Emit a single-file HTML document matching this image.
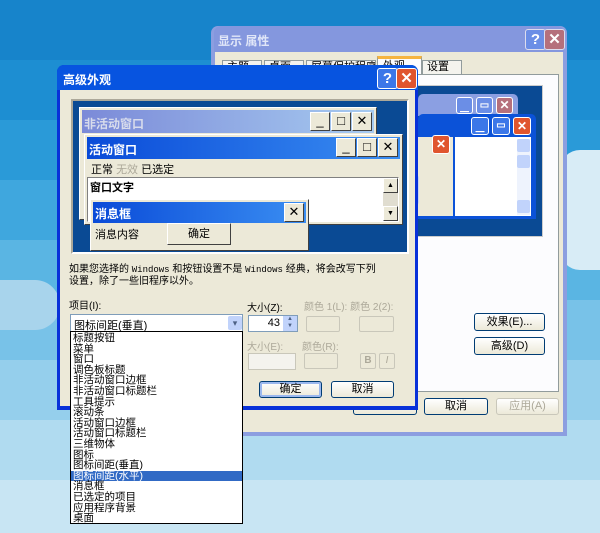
<!DOCTYPE html>
<html><head><meta charset="utf-8"><style>
*{margin:0;padding:0;box-sizing:border-box}
html,body{width:600px;height:533px;overflow:hidden;background:#6db9e4}
body{position:relative;font-family:"Liberation Sans","Noto Sans CJK SC","WenQuanYi Zen Hei",sans-serif;font-size:11px;color:#000}
.a{position:absolute}
.band{position:absolute;left:0;width:600px}
.beige{background:#ece9d8}
.tb{font-weight:bold;color:#fff;font-size:12px}
.btnx{position:absolute;width:21px;height:21px;border:1px solid #fff;border-radius:3px;background:#e0552e;color:#fff;font-weight:bold;font-size:15px;text-align:center;line-height:19px}
.btnh{position:absolute;width:21px;height:21px;border:1px solid #fff;border-radius:3px;background:#3c77e8;color:#fff;font-weight:bold;font-size:15px;text-align:center;line-height:19px}
.cls{position:absolute;background:#ece9d8;border:1px solid;border-color:#fff #404040 #404040 #fff;text-align:center;font-size:13px;line-height:16px;color:#000}
.xbtn{position:absolute;border:1px solid #003c74;border-radius:3px;background:linear-gradient(#fff,#ece9d8);text-align:center;font-size:11px}
.dis{color:#aca899}
.item{height:10.6px;line-height:10.6px;padding-left:2px;font-size:10.5px;white-space:nowrap}
.tab{position:absolute;top:60px;height:15px;border:1px solid #919b9c;background:#f4f3ee;padding-left:4px;line-height:13px;overflow:hidden;white-space:nowrap}
</style></head><body>
<div class="band" style="top:0;height:60px;background:#1784cb"></div>
<div class="band" style="top:60px;height:60px;background:#1d8ed2"></div>
<div class="band" style="top:120px;height:60px;background:#2a9ad8"></div>
<div class="band" style="top:180px;height:60px;background:#3fa7de"></div>
<div class="band" style="top:240px;height:60px;background:#5ab5e3"></div>
<div class="band" style="top:300px;height:60px;background:#78c2e8"></div>
<div class="band" style="top:360px;height:60px;background:#95cfec"></div>
<div class="band" style="top:420px;height:60px;background:#b0dbf0"></div>
<div class="band" style="top:480px;height:53px;background:#c8e5f3"></div>
<div class="a" style="left:560px;top:150px;width:40px;height:120px;background:#d8ecf6;border-radius:20px 0 0 20px"></div>
<div class="a" style="left:0;top:280px;width:60px;height:50px;background:#a8d4ec;border-radius:0 25px 25px 0"></div>

<!-- back window -->
<div class="a" style="left:211px;top:26px;width:356px;height:410px;background:#8c9ee0;border-radius:7px 7px 0 0"></div>
<div class="a" style="left:214px;top:26px;width:350px;height:26px;background:#8497de;border-radius:7px 7px 0 0"></div>
<div class="a tb" style="left:218px;top:32px;color:#e0e6f8">显示 属性</div>
<div class="btnh" style="left:525px;top:29px;background:#6b8ee6;border-color:#dde">?</div>
<div class="btnx" style="left:544px;top:29px;background:#b5707c;border-color:#dde">✕</div>
<div class="a beige" style="left:215px;top:52px;width:348px;height:380px"></div>
<div class="tab" style="left:222px;width:40px">主题</div>
<div class="tab" style="left:264px;width:40px">桌面</div>
<div class="tab" style="left:306px;width:70px">屏幕保护程序</div>
<div class="a" style="left:377px;top:56px;width:45px;height:19px;border:1px solid #919b9c;border-top:3px solid #f5b440;background:#fcfcfe;padding-left:5px;line-height:14px">外观</div>
<div class="tab" style="left:422px;width:40px">设置</div>
<div class="a" style="left:220px;top:74px;width:339px;height:318px;border:1px solid #919b9c;background:#fcfcfe"></div>
<div class="a" style="left:400px;top:85px;width:143px;height:152px;background:#0a4a94;border:1px solid #ccc"></div>
<div class="a" style="left:418px;top:94px;width:100px;height:22px;background:#8b9fe2;border-radius:5px 5px 0 0"></div>
<div class="btnh" style="left:456px;top:97px;width:17px;height:17px;background:#6b8ee6;font-size:9px;line-height:20px">▁</div>
<div class="btnh" style="left:476px;top:97px;width:17px;height:17px;background:#6b8ee6;font-size:10px;line-height:15px">▭</div>
<div class="btnx" style="left:496px;top:97px;width:17px;height:17px;background:#b5707c;font-size:12px;line-height:15px">✕</div>
<div class="a" style="left:418px;top:114px;width:118px;height:105px;background:#0b52d8;border-radius:5px 5px 0 0"></div>
<div class="btnh" style="left:471px;top:117px;width:18px;height:18px;font-size:9px;line-height:20px">▁</div>
<div class="btnh" style="left:492px;top:117px;width:18px;height:18px;font-size:10px;line-height:16px">▭</div>
<div class="btnx" style="left:513px;top:117px;width:18px;height:18px;font-size:12px;line-height:16px">✕</div>
<div class="a beige" style="left:418px;top:137px;width:35px;height:79px"></div>
<div class="a" style="left:418px;top:130px;width:35px;height:7px;background:#0b52d8"></div>
<div class="btnx" style="left:432px;top:135px;width:18px;height:19px;font-size:12px;line-height:17px">✕</div>
<div class="a" style="left:455px;top:137px;width:76px;height:79px;background:#fff"></div>
<div class="a" style="left:517px;top:139px;width:13px;height:76px;background:#eef3fd"></div>
<div class="a" style="left:517px;top:139px;width:13px;height:13px;background:#c1d3fb;border-radius:2px"></div>
<div class="a" style="left:517px;top:155px;width:13px;height:13px;background:#c1d3fb;border-radius:2px"></div>
<div class="a" style="left:517px;top:200px;width:13px;height:13px;background:#c1d3fb;border-radius:2px"></div>
<div class="a" style="left:411px;top:175px;width:8px;height:30px;background:#c9d5f0;border-radius:3px"></div>
<div class="xbtn" style="left:474px;top:313px;width:71px;height:18px;line-height:16px">效果(E)...</div>
<div class="xbtn" style="left:474px;top:337px;width:71px;height:18px;line-height:16px">高级(D)</div>
<div class="xbtn" style="left:353px;top:398px;width:64px;height:17px"></div>
<div class="xbtn" style="left:424px;top:398px;width:64px;height:17px;line-height:15px">取消</div>
<div class="xbtn dis" style="left:496px;top:398px;width:63px;height:17px;line-height:15px;border-color:#c9c7ba">应用(A)</div>

<!-- front dialog -->
<div class="a" style="left:57px;top:65px;width:361px;height:345px;background:#0831d9;border-radius:7px 7px 0 0"></div>
<div class="a" style="left:57px;top:65px;width:361px;height:25px;background:#0754e0;border-radius:7px 7px 0 0"></div>
<div class="a tb" style="left:63px;top:71px">高级外观</div>
<div class="btnh" style="left:377px;top:68px">?</div>
<div class="btnx" style="left:396px;top:68px">✕</div>
<div class="a beige" style="left:60px;top:90px;width:355px;height:316px"></div>
<div class="a" style="left:71px;top:99px;width:338px;height:155px;background:#0a4a94;border:2px solid;border-color:#aca899 #fff #fff #aca899"></div>
<div class="a beige" style="left:79px;top:107px;width:298px;height:113px;border:1px solid;border-color:#fff #404040 #404040 #fff"></div>
<div class="a" style="left:82px;top:110px;width:292px;height:23px;background:linear-gradient(90deg,#7b8ad8,#a6caf0)"></div>
<div class="a tb" style="left:84px;top:115px;color:#d8dcec">非活动窗口</div>
<div class="cls" style="left:310px;top:112px;width:20px;height:19px">_</div>
<div class="cls" style="left:331px;top:112px;width:20px;height:19px">□</div>
<div class="cls" style="left:352px;top:112px;width:20px;height:19px">✕</div>
<div class="a beige" style="left:84px;top:134px;width:319px;height:91px;border:1px solid;border-color:#fff #404040 #404040 #fff"></div>
<div class="a" style="left:87px;top:137px;width:313px;height:22px;background:linear-gradient(90deg,#0a4bd8,#3a8ef2)"></div>
<div class="a tb" style="left:89px;top:141px">活动窗口</div>
<div class="cls" style="left:336px;top:138px;width:20px;height:19px">_</div>
<div class="cls" style="left:357px;top:138px;width:20px;height:19px">□</div>
<div class="cls" style="left:378px;top:138px;width:20px;height:19px">✕</div>
<div class="a" style="left:91px;top:161px">正常 <span class="dis">无效</span> 已选定</div>
<div class="a" style="left:87px;top:177px;width:312px;height:45px;background:#fff;border:1px solid;border-color:#808080 #fff #fff #808080"></div>
<div class="a" style="left:90px;top:179px;font-weight:bold;font-size:11px">窗口文字</div>
<div class="a" style="left:383px;top:178px;width:15px;height:43px;background:#e0ddd0"></div>
<div class="cls" style="left:383px;top:178px;width:15px;height:15px;font-size:7px;line-height:13px">▲</div>
<div class="cls" style="left:383px;top:206px;width:15px;height:15px;font-size:7px;line-height:13px">▼</div>
<div class="a beige" style="left:90px;top:199px;width:219px;height:52px;border:1px solid;border-color:#fff #404040 #404040 #fff"></div>
<div class="a" style="left:93px;top:202px;width:213px;height:21px;background:linear-gradient(90deg,#0a4bd8,#3a8ef2)"></div>
<div class="a tb" style="left:95px;top:205px">消息框</div>
<div class="cls" style="left:284px;top:203px;width:20px;height:19px">✕</div>
<div class="a" style="left:95px;top:226px">消息内容</div>
<div class="cls" style="left:167px;top:223px;width:64px;height:22px;font-size:11px;line-height:20px">确定</div>

<div class="a" style="left:69px;top:264px;font-size:10px;line-height:11px;width:345px">如果您选择的 <span style="font-family:'Liberation Mono';font-size:9px">Windows</span> 和按钮设置不是 <span style="font-family:'Liberation Mono';font-size:9px">Windows</span> 经典，将会改写下列<br>设置，除了一些旧程序以外。</div>
<div class="a" style="left:69px;top:297px;font-size:10px">项目(I):</div>
<div class="a" style="left:70px;top:314px;width:173px;height:18px;background:#fff;border:1px solid #7f9db9;padding:2px 0 0 3px">图标间距(垂直)</div>
<div class="a" style="left:228px;top:316px;width:14px;height:14px;background:#c1d3fb;border-radius:2px;color:#4d6185;font-size:9px;text-align:center;line-height:14px">▾</div>
<div class="a" style="left:70px;top:331px;width:173px;height:193px;background:#fff;border:1px solid #000;padding-top:1px;overflow:hidden">
<div class="item">标题按钮</div><div class="item">菜单</div><div class="item">窗口</div><div class="item">调色板标题</div><div class="item">非活动窗口边框</div><div class="item">非活动窗口标题栏</div><div class="item">工具提示</div><div class="item">滚动条</div><div class="item">活动窗口边框</div><div class="item">活动窗口标题栏</div><div class="item">三维物体</div><div class="item">图标</div><div class="item">图标间距(垂直)</div><div class="item" style="background:#316ac5;color:#fff">图标间距(水平)</div><div class="item">消息框</div><div class="item">已选定的项目</div><div class="item">应用程序背景</div><div class="item">桌面</div>
</div>
<div class="a" style="left:247px;top:299px;font-size:10px">大小(Z):</div>
<div class="a dis" style="left:304px;top:298px;font-size:10px">颜色 1(L): 颜色 2(2):</div>
<div class="a" style="left:248px;top:315px;width:50px;height:17px;background:#fff;border:1px solid #7f9db9;text-align:right;padding:1px 17px 0 0">43</div>
<div class="a" style="left:283px;top:316px;width:14px;height:15px;background:#c1d3fb;font-size:6px;line-height:7px;text-align:center;color:#4d6185">▲<br>▼</div>
<div class="a" style="left:306px;top:316px;width:34px;height:16px;border:1px solid #c9c7ba;border-radius:2px"></div>
<div class="a" style="left:359px;top:316px;width:35px;height:16px;border:1px solid #c9c7ba;border-radius:2px"></div>
<div class="a dis" style="left:247px;top:338px;font-size:10px">大小(E):</div>
<div class="a dis" style="left:302px;top:338px;font-size:10px">颜色(R):</div>
<div class="a" style="left:248px;top:353px;width:48px;height:17px;border:1px solid #c9c7ba;background:#f4f3ee"></div>
<div class="a" style="left:304px;top:353px;width:34px;height:16px;border:1px solid #c9c7ba;border-radius:2px"></div>
<div class="a dis" style="left:360px;top:353px;width:16px;height:16px;border:1px solid #c9c7ba;border-radius:2px;text-align:center;font-weight:bold;font-size:10px;line-height:14px">B</div>
<div class="a dis" style="left:379px;top:353px;width:16px;height:16px;border:1px solid #c9c7ba;border-radius:2px;text-align:center;font-style:italic;font-size:10px;line-height:14px">I</div>
<div class="xbtn" style="left:259px;top:381px;width:63px;height:17px;line-height:15px;box-shadow:inset 0 0 0 2px #9bb8ee">确定</div>
<div class="xbtn" style="left:331px;top:381px;width:63px;height:17px;line-height:15px">取消</div>
</body></html>
